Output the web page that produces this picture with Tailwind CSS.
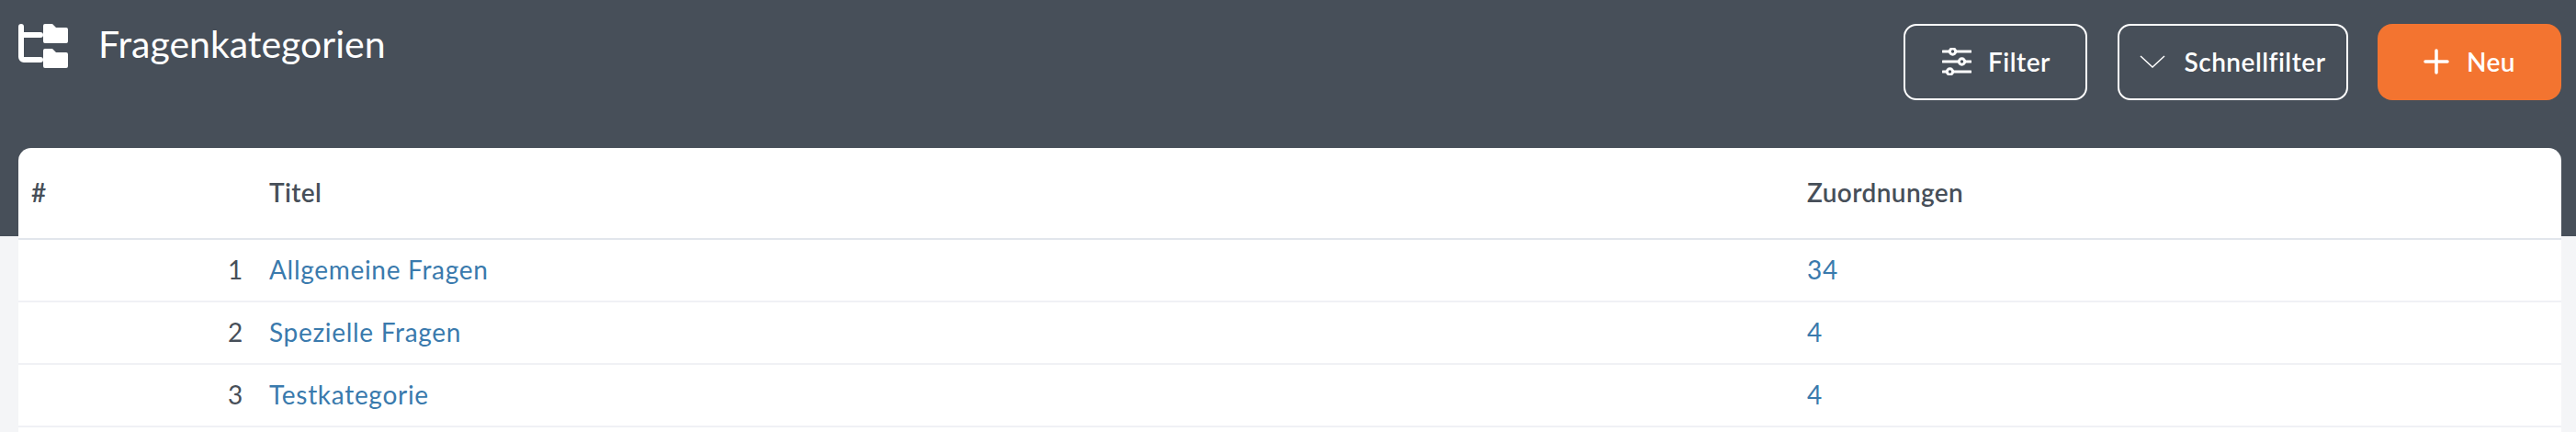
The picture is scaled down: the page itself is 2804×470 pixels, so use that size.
<!DOCTYPE html>
<html lang="de">
  <head>
    <meta charset="UTF-8" />
    <title>Fragenkategorien</title>
    <script src="https://cdn.jsdelivr.net/npm/@tailwindcss/browser@4"></script>
  </head>
  <body class="bg-[#f4f5f7] h-[470px] overflow-hidden font-['Lato',sans-serif] text-[#474f59]">
    <header class="h-[257px] bg-[#474f59] pl-[20px] pr-[16px] pt-[26px] flex justify-between items-start text-white">
      <div class="flex items-start">
        <svg width="54" height="48" viewBox="0 0 54 48" fill="#fff">
          <path d="M3 3V36a3 3 0 0 0 3 3H24M3 12H24" fill="none" stroke="#fff" stroke-width="6" stroke-linecap="round" stroke-linejoin="round" />
          <path d="M29 0h8l4 4h11a2 2 0 0 1 2 2v13a2 2 0 0 1-2 2H29a2 2 0 0 1-2-2V2a2 2 0 0 1 2-2z" />
          <path d="M29 27h8l4 4h11a2 2 0 0 1 2 2v13a2 2 0 0 1-2 2H29a2 2 0 0 1-2-2V29a2 2 0 0 1 2-2z" />
        </svg>
        <h1 class="ml-[33px] -mt-[3px] text-[41px] leading-[50px] font-normal">Fragenkategorien</h1>
      </div>
      <div class="flex text-[28px] tracking-[0.5px] font-semibold leading-[34px]">
        <button class="w-[200px] h-[83px] pb-[2px] border-2 border-white rounded-[14px] flex items-center justify-center gap-[18px]">
          <svg class="ml-[2px]" width="32" height="30" viewBox="0 0 32 30" fill="none" stroke="#fff" stroke-width="3" stroke-linecap="round">
            <path d="M1 4H8M15 4H31M1 15H18M25 15H31M1 26H5M12 26H31" />
            <circle cx="11.5" cy="4" r="3.2" />
            <circle cx="21.5" cy="15" r="3.2" />
            <circle cx="8.5" cy="26" r="3.2" />
          </svg>
          Filter
        </button>
        <button class="ml-[33px] w-[251px] h-[83px] pb-[2px] border-2 border-white rounded-[14px] flex items-center justify-center gap-[20px]">
          <svg width="28" height="14" viewBox="0 0 28 14" fill="none" stroke="#fff" stroke-width="1.5">
            <path d="M1 1L14 13L27 1" />
          </svg>
          Schnellfilter
        </button>
        <button class="ml-[32px] w-[200px] h-[83px] pb-[2px] bg-[#f37430] rounded-[16px] flex items-center justify-center gap-[19px]">
          <svg width="28" height="28" viewBox="0 0 28 28" fill="none" stroke="#fff" stroke-width="3.5" stroke-linecap="round">
            <path d="M14 2V26M2 14H26" />
          </svg>
          Neu
        </button>
      </div>
    </header>
    <main class="-mt-[96px] ml-[20px] mr-[16px] h-[320px] bg-white rounded-t-[14px] overflow-hidden">
      <table class="w-full table-fixed text-[28px]">
        <thead class="tracking-[0.4px]">
          <tr class="h-[99px] border-b-2 border-[#e2e6ec] text-left">
            <th class="w-[257px] pl-[14px] pb-[2px] font-semibold">#</th>
            <th class="w-[1674px] pl-[16px] pb-[2px] font-semibold">Titel</th>
            <th class="pl-[16px] pb-[2px] font-semibold">Zuordnungen</th>
          </tr>
        </thead>
        <tbody class="text-[#3a7aad] tracking-[0.7px]">
          <tr class="h-[68px] border-b-2 border-[#f0f1f5]">
            <td class="pr-[12px] pb-[2px] text-right text-[#474f59]">1</td>
            <td class="pl-[16px] pb-[2px]">Allgemeine Fragen</td>
            <td class="pl-[16px] pb-[2px]">34</td>
          </tr>
          <tr class="h-[68px] border-b-2 border-[#f0f1f5]">
            <td class="pr-[12px] pb-[2px] text-right text-[#474f59]">2</td>
            <td class="pl-[16px] pb-[2px]">Spezielle Fragen</td>
            <td class="pl-[16px] pb-[2px]">4</td>
          </tr>
          <tr class="h-[68px] border-b-2 border-[#f0f1f5]">
            <td class="pr-[12px] pb-[2px] text-right text-[#474f59]">3</td>
            <td class="pl-[16px] pb-[2px]">Testkategorie</td>
            <td class="pl-[16px] pb-[2px]">4</td>
          </tr>
        </tbody>
      </table>
    </main>
  </body>
</html>
